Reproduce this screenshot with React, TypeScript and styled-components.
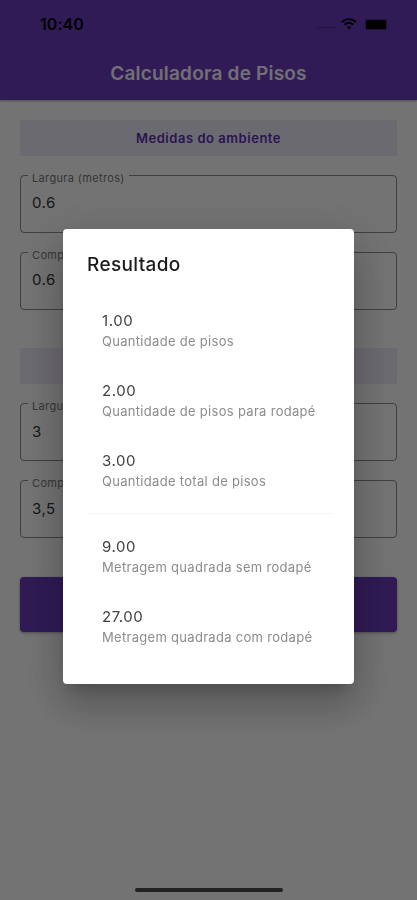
import React from 'react';
import styled, { createGlobalStyle } from 'styled-components';

const GlobalStyle = createGlobalStyle`
  * { box-sizing: border-box; }
  body { margin: 0; background: #fafafa; font-family: Inter, 'Liberation Sans', sans-serif; overflow: hidden; }
`;

const Screen = styled.div`
  height: 900px;
  width: 417px;
  display: flex;
  flex-direction: column;
  background: #fafafa;
`;

const AppBar = styled.header`
  height: 100px;
  flex: none;
  background: #6b3bbd;
  box-shadow: 0 1px 2px rgba(0, 0, 0, 0.35);
`;

const StatusBar = styled.div`
  height: 48px;
  padding: 0 29px 0 40px;
  display: flex;
  align-items: center;
  justify-content: space-between;
`;

const Time = styled.span`
  font-size: 16px;
  line-height: 20px;
  font-weight: 600;
  letter-spacing: 0.05px;
  color: #000;
`;

const StatusIcons = styled.div`
  display: flex;
  align-items: center;
  gap: 8px;
`;

const Signal = styled.span`
  width: 19px;
  height: 1px;
  margin: 7px -3px 0 0;
  background: rgba(0, 0, 0, 0.3);
`;

const Battery = styled.span`
  width: 22px;
  height: 11px;
  margin-right: 1px;
  padding: 1px;
  border-radius: 3px;
  background: rgba(0, 0, 0, 0.3);
  &::before {
    content: '';
    display: block;
    height: 9px;
    border-radius: 1px;
    background: #000;
  }
`;

const Title = styled.h1`
  margin: 0;
  height: 52px;
  line-height: 51px;
  text-align: center;
  font-size: 19px;
  font-weight: 600;
  letter-spacing: 0.2px;
  color: #f6f2fb;
`;

const Form = styled.main`
  padding: 20px 20px 0;
  display: flex;
  flex-direction: column;
`;

const SectionTitle = styled.h2<{ $spaced?: boolean }>`
  margin: ${(p) => (p.$spaced ? '38px' : '0')} 0 0;
  height: 36px;
  line-height: 36px;
  border-radius: 2px;
  text-align: center;
  font-size: 13px;
  font-weight: 600;
  letter-spacing: 0.54px;
  color: #5a30b0;
  background: #ebe7f6;
`;

const Field = styled.fieldset<{ $drop?: number }>`
  margin: 9px 0 0;
  padding: ${(p) => p.$drop ?? 0}px 11px 0 7px;
  height: 68px;
  min-width: 0;
  border: 1px solid #8a8a8a;
  border-radius: 4px;
`;

const Label = styled.legend`
  padding: 6px 4px 0;
  height: 20px;
  line-height: 14px;
  font-size: 11px;
  letter-spacing: 0.35px;
  color: #777;
`;

const Value = styled.div`
  padding-left: 4px;
  line-height: 20px;
  margin-top: 8px;
  font-size: 15px;
  letter-spacing: 0.5px;
  color: #333;
`;

const SubmitButton = styled.button`
  margin-top: 39px;
  height: 55px;
  border: 0;
  border-radius: 4px;
  background: #673ab7;
  color: #fff;
  font: 500 15px Inter, sans-serif;
  box-shadow: 0 1px 3px rgba(0, 0, 0, 0.35);
`;

const Barrier = styled.div`
  position: fixed;
  inset: 0;
  display: flex;
  justify-content: center;
  align-items: flex-start;
  padding-top: 229px;
  background: rgba(0, 0, 0, 0.54);
`;

const Dialog = styled.section`
  width: 291px;
  height: 455px;
  padding: 24px;
  border-radius: 4px;
  background: #fff;
  box-shadow: 0 11px 15px -7px rgba(0, 0, 0, 0.2), 0 24px 38px 3px rgba(0, 0, 0, 0.14),
    0 9px 46px 8px rgba(0, 0, 0, 0.12);
`;

const DialogTitle = styled.h2`
  margin: 0 0 19px;
  line-height: 24px;
  font-size: 19px;
  font-weight: 500;
  letter-spacing: 0.35px;
  color: #1c1c1c;
`;

const Result = styled.div`
  height: 70px;
  padding: 15px 0 0 15px;
`;

const Amount = styled.div`
  line-height: 20px;
  font-size: 15px;
  letter-spacing: 0.55px;
  color: #404040;
`;

const Caption = styled.div`
  line-height: 20px;
  font-size: 13px;
  letter-spacing: 0.3px;
  white-space: nowrap;
  color: #8c8c8c;
`;

const Divider = styled.hr`
  margin: 7px -3px 8px 0;
  border: 0;
  height: 1px;
  background: #f5f5f5;
`;

const HomeIndicator = styled.div`
  position: fixed;
  left: 135px;
  bottom: 8px;
  width: 148px;
  height: 4px;
  border-radius: 2px;
  background: #222;
`;

const WifiIcon = () => (
  <svg width="16" height="12" viewBox="0 0 16 12" fill="none" stroke="#000" strokeWidth="1.9">
    <path d="M1 4.2C5 .1 11 .1 15 4.2M3.6 6.8C6.3 4.2 9.7 4.2 12.4 6.8" />
    <path d="M8 11.5 5.7 9.1C7.1 7.9 8.9 7.9 10.3 9.1Z" fill="#000" stroke="none" />
  </svg>
);

const pieces = [
  ['1.00', 'Quantidade de pisos'],
  ['2.00', 'Quantidade de pisos para rodapé'],
  ['3.00', 'Quantidade total de pisos'],
];

const areas = [
  ['9.00', 'Metragem quadrada sem rodapé'],
  ['27.00', 'Metragem quadrada com rodapé'],
];

const ResultRow = ({ amount, caption }: { amount: string; caption: string }) => (
  <Result>
    <Amount>{amount}</Amount>
    <Caption>{caption}</Caption>
  </Result>
);

const Measure = ({ label, value, drop }: { label: string; value: string; drop?: number }) => (
  <Field $drop={drop}>
    <Label>{label}</Label>
    <Value>{value}</Value>
  </Field>
);

export default function App() {
  return (
    <>
      <GlobalStyle />
      <Screen>
        <AppBar>
          <StatusBar>
            <Time>10:40</Time>
            <StatusIcons>
              <Signal />
              <WifiIcon />
              <Battery />
            </StatusIcons>
          </StatusBar>
          <Title>Calculadora de Pisos</Title>
        </AppBar>
        <Form>
          <SectionTitle>Medidas do ambiente</SectionTitle>
          <Measure label="Largura (metros)" value="0.6" />
          <Measure label="Comp" value="0.6" />
          <SectionTitle $spaced />
          <Measure label="Largu" value="3" drop={1} />
          <Measure label="Comp" value="3,5" drop={1} />
          <SubmitButton aria-label="Calcular" />
        </Form>
      </Screen>
      <Barrier>
        <Dialog role="dialog">
          <DialogTitle>Resultado</DialogTitle>
          {pieces.map(([amount, caption]) => (
            <ResultRow key={caption} amount={amount} caption={caption} />
          ))}
          <Divider />
          {areas.map(([amount, caption]) => (
            <ResultRow key={caption} amount={amount} caption={caption} />
          ))}
        </Dialog>
      </Barrier>
      <HomeIndicator />
    </>
  );
}
